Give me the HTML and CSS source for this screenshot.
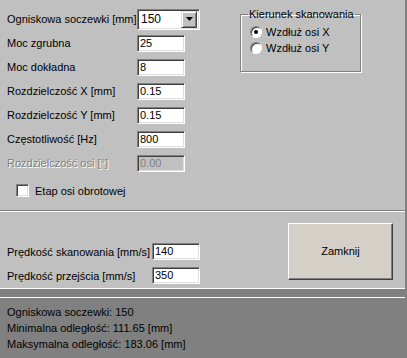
FILE: index.html
```html
<!DOCTYPE html>
<html lang="pl">
<head>
    <meta charset="UTF-8">
    <title>Parametry skanowania</title>
    <link rel="stylesheet" href="styles.css">
</head>
<body>
    <div class="window">
        <!-- Parametry soczewki i skanowania -->
        <section class="panel-params">
            <div class="params">
                <div class="field">
                    <span class="field-label">Ogniskowa soczewki [mm]</span>
                    <div class="combo">
                        <span class="combo-value">150</span>
                        <span class="combo-btn">
                            <svg width="7" height="4" viewBox="0 0 7 4"><path d="M0 0h7L3.5 4z" fill="#000"/></svg>
                        </span>
                    </div>
                </div>
                <div class="field">
                    <span class="field-label">Moc zgrubna</span>
                    <span class="edit">25</span>
                </div>
                <div class="field">
                    <span class="field-label">Moc dokładna</span>
                    <span class="edit">8</span>
                </div>
                <div class="field">
                    <span class="field-label">Rozdzielczość X [mm]</span>
                    <span class="edit">0.15</span>
                </div>
                <div class="field">
                    <span class="field-label">Rozdzielczość Y [mm]</span>
                    <span class="edit">0.15</span>
                </div>
                <div class="field">
                    <span class="field-label">Częstotliwość [Hz]</span>
                    <span class="edit">800</span>
                </div>
                <div class="field disabled">
                    <span class="field-label">Rozdzielczość osi [°]</span>
                    <span class="edit">0.00</span>
                </div>
                <label class="check">
                    <span class="check-box"></span>
                    Etap osi obrotowej
                </label>
            </div>

            <fieldset class="group">
                <legend>Kierunek skanowania</legend>
                <label class="radio-row">
                    <span class="radio checked"></span>
                    Wzdłuż osi X
                </label>
                <label class="radio-row">
                    <span class="radio"></span>
                    Wzdłuż osi Y
                </label>
            </fieldset>
        </section>

        <!-- Prędkości -->
        <section class="panel-speed">
            <div class="speeds">
                <div class="field">
                    <span class="field-label wide">Prędkość skanowania [mm/s]</span>
                    <span class="edit">140</span>
                </div>
                <div class="field">
                    <span class="field-label wide">Prędkość przejścia [mm/s]</span>
                    <span class="edit">350</span>
                </div>
            </div>
            <button class="btn-close">Zamknij</button>
        </section>

        <div class="band"></div>

        <!-- Podsumowanie -->
        <section class="info">
            <div>Ogniskowa soczewki: 150</div>
            <div>Minimalna odległość: 111.65 [mm]</div>
            <div>Maksymalna odległość: 183.06 [mm]</div>
        </section>
    </div>
</body>
</html>
```

FILE: styles.css
```css
* {
    margin: 0;
    padding: 0;
    box-sizing: border-box;
}

body {
    font-family: "Liberation Sans", Arial, sans-serif;
    font-size: 11px;
    background-color: #c0c0c0;
    color: #000000;
    overflow: hidden;
}

.window {
    width: 407px;
    height: 358px;
    display: flex;
    flex-direction: column;
    border-right: 2px solid #808080;
}

/* top panel */

.panel-params {
    height: 214px;
    display: flex;
}

.params {
    width: 240px;
    padding: 7px 0 0 7px;
}

.field {
    display: flex;
    align-items: center;
    height: 24px;
}

.field-label {
    width: 130px;
    white-space: nowrap;
}

.field-label.wide {
    width: 145px;
}

.edit {
    width: 48px;
    height: 17px;
    padding-left: 2px;
    line-height: 15px;
    background-color: #ffffff;
    border: 1px solid;
    border-color: #808080 #ffffff #ffffff #808080;
    box-shadow: inset 1px 1px 0 #404040, inset -1px -1px 0 #dfdfdf;
}

.field.disabled .field-label {
    color: #808080;
    text-shadow: 1px 1px 0 #ffffff;
}

.field.disabled .edit {
    background-color: #c0c0c0;
    color: #808080;
}

.combo {
    width: 63px;
    height: 21px;
    display: flex;
    align-items: center;
    justify-content: space-between;
    padding: 0 2px 0 3px;
    background-color: #ffffff;
    border: 1px solid;
    border-color: #808080 #ffffff #ffffff #808080;
    box-shadow: inset 1px 1px 0 #404040, inset -1px -1px 0 #dfdfdf;
    font-size: 12px;
}

.combo-btn {
    width: 16px;
    height: 17px;
    display: flex;
    align-items: center;
    justify-content: center;
    background-color: #c0c0c0;
    border: 1px solid;
    border-color: #dfdfdf #404040 #404040 #dfdfdf;
    box-shadow: inset 1px 1px 0 #ffffff, inset -1px -1px 0 #808080;
}

.check {
    display: flex;
    align-items: center;
    gap: 6px;
    margin-top: 9px;
    padding-left: 9px;
}

.check-box {
    width: 13px;
    height: 13px;
    background-color: #ffffff;
    border: 1px solid;
    border-color: #808080 #ffffff #ffffff #808080;
    box-shadow: inset 1px 1px 0 #404040, inset -1px -1px 0 #dfdfdf;
}

.group {
    width: 121px;
    height: 64px;
    margin-top: 8px;
    padding: 0 0 0 9px;
    border: 1px solid #808080;
    box-shadow: inset 1px 1px 0 #ffffff, 1px 1px 0 #ffffff;
}

.group legend {
    margin-left: -2px;
    padding: 0 1px;
    line-height: 13px;
}

.radio-row {
    display: flex;
    align-items: center;
    gap: 4px;
    height: 16px;
}

.radio-row:first-of-type {
    margin-top: 3px;
}

.radio {
    width: 12px;
    height: 12px;
    border-radius: 50%;
    display: flex;
    align-items: center;
    justify-content: center;
    background-color: #ffffff;
    border: 1px solid;
    border-color: #808080 #ffffff #ffffff #808080;
    box-shadow: inset 1px 1px 0 #404040;
}

.radio.checked::after {
    content: "";
    width: 4px;
    height: 4px;
    border-radius: 50%;
    background-color: #000000;
}

/* middle panel */

.panel-speed {
    height: 81px;
    display: flex;
    justify-content: space-between;
    padding: 12px 12px 0 7px;
    border-top: 1px solid #808080;
    border-bottom: 1px solid #ffffff;
    box-shadow: inset 0 1px 0 #ffffff;
}

.speeds {
    margin-top: 17px;
}

.btn-close {
    width: 105px;
    height: 57px;
    font-family: inherit;
    font-size: 11px;
    color: #000000;
    background-color: #d4d0c8;
    border: 1px solid;
    border-color: #ffffff #404040 #404040 #ffffff;
    box-shadow: inset -1px -1px 0 #808080;
}

/* bottom panel */

.band {
    height: 9px;
    background-color: #808080;
    border-bottom: 1px solid #ffffff;
}

.info {
    flex: 1;
    padding: 6px 7px;
    line-height: 16px;
    background-color: #808080;
}
```
